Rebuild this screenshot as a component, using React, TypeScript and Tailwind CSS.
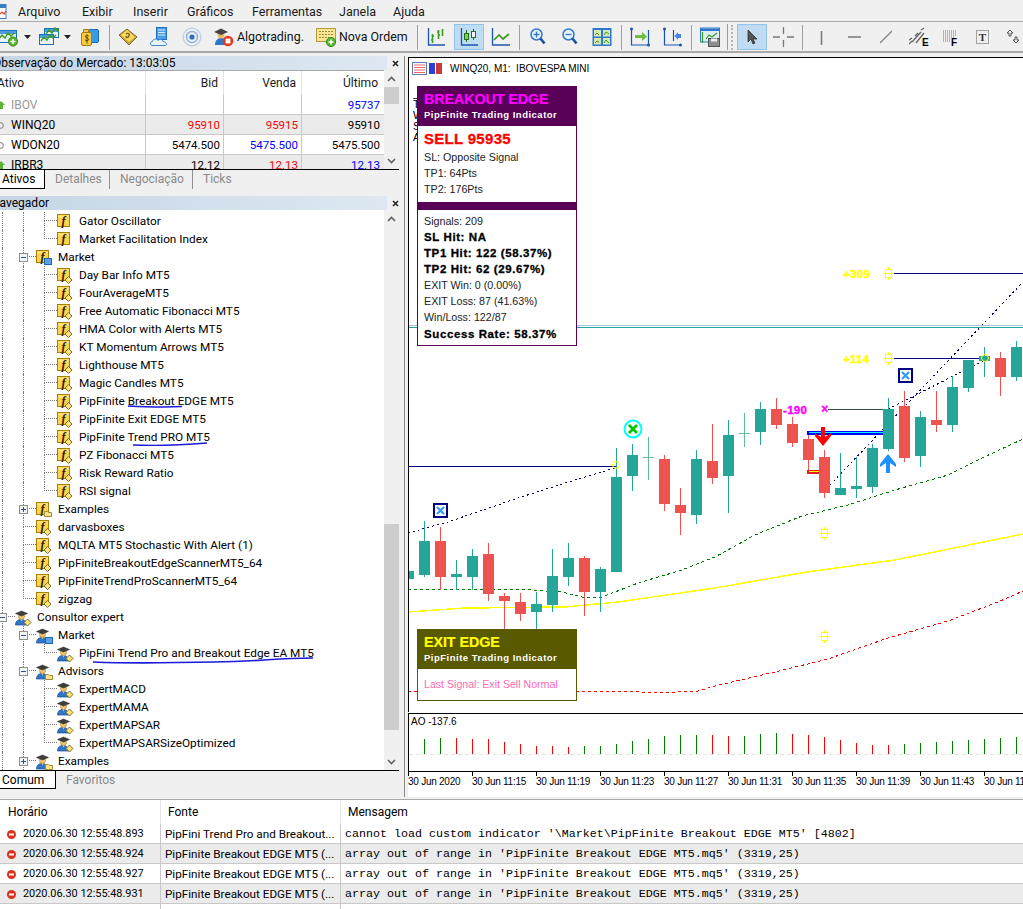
import React from "react";

const T = "#26a69a";
const R = "#ef5350";
const D = "#5fb89f";
const candles: [number, string, number, number, number, number][] = [
  [0, T, 565, 571, 579, 582],
  [1, T, 521, 541, 575, 577],
  [2, R, 527, 541, 577, 590],
  [3, T, 560, 574, 577, 590],
  [4, T, 549, 556, 577, 590],
  [5, R, 543, 554, 594, 601],
  [6, R, 593, 596, 601, 632],
  [7, R, 593, 602, 614, 621],
  [8, T, 592, 604, 612, 632],
  [9, T, 549, 576, 605, 612],
  [10, T, 543, 558, 577, 586],
  [11, R, 556, 558, 592, 616],
  [12, T, 567, 569, 592, 612],
  [13, T, 448, 477, 572, 572],
  [14, T, 444, 455, 476, 491],
  [16, R, 455, 459, 504, 511],
  [17, R, 488, 505, 513, 535],
  [18, T, 450, 459, 515, 524],
  [19, R, 424, 461, 478, 484],
  [20, T, 420, 435, 476, 513],
  [22, T, 402, 409, 432, 445],
  [23, R, 398, 409, 425, 429],
  [24, R, 417, 424, 443, 447],
  [25, R, 435, 439, 460, 472],
  [26, R, 450, 457, 493, 498],
  [27, T, 453, 488, 495, 495],
  [28, T, 457, 486, 489, 498],
  [29, T, 444, 448, 487, 493],
  [30, T, 398, 409, 449, 451],
  [31, R, 391, 406, 458, 462],
  [32, T, 411, 417, 456, 467],
  [33, R, 391, 420, 425, 432],
  [34, T, 376, 387, 425, 432],
  [35, T, 360, 360, 388, 392],
  [36, T, 347, 356, 361, 377],
  [37, R, 352, 358, 377, 396],
  [38, T, 341, 347, 377, 381],
];

const aoTops = [120,117,117,120,120,129,135,141,141,144,141,141,135,126,120,111,108,108,108,111,111,105,102,105,108,114,123,132,138,138,135,132,129,126,123,120,117,114];
const aoCol = "ggrrrrrrrrggggggggrrgggrrrrrrrgggggggg";

const sans = "[font-family:Roboto,'Noto_Sans',sans-serif]";

function FIcon({ kind = "diamond" }: { kind?: "diamond" | "plain" | "market" | "folder" }) {
  return (
    <svg width="16" height="17" viewBox="0 0 16 17" className="shrink-0">
      <rect x="0.5" y="1.500" width="12" height="12" fill="#ffd34d" stroke="#a97f00" />
      <rect x="1.500" y="2.500" width="10" height="2" fill="#ffe68a" />
      <text x="6.500" y="11.500" textAnchor="middle" fontFamily="'Liberation Serif',serif" fontStyle="italic" fontWeight="700" fontSize="12" fill="#2a2000">f</text>
      {kind === "diamond" && <path d="M11.500 9.500l3.500 3.500-3.500 3.500-3.500-3.500z" fill="#ffe27a" stroke="#6d5c16" strokeWidth="0.9" />}
      {kind === "market" && <rect x="8.500" y="9.500" width="7" height="6" fill="#5ba3e6" stroke="#1c63b0" />}
      {kind === "folder" && <path d="M8.500 10.500h3l1 1h3v4h-7z" fill="#ffe38a" stroke="#a48b35" />}
    </svg>
  );
}

function ExpertIcon({ kind = "diamond" }: { kind?: "diamond" | "market" | "folder" }) {
  return (
    <svg width="17" height="17" viewBox="0 0 17 17" className="shrink-0">
      <path d="M0.500 16c0-4 2.400-5.500 5.500-5.500s5.500 1.500 5.500 5.500z" fill="#2f76c9" stroke="#184e93" strokeWidth="0.7" />
      <circle cx="6.500" cy="7.500" r="3" fill="#f2c572" stroke="#a97826" strokeWidth="0.6" />
      <path d="M0.500 4.500L6.500 2l6 2.500-6 2.500z" fill="#3d3d3d" stroke="#222" strokeWidth="0.5" />
      <path d="M5.500 10.500l1 2 1-2z" fill="#e9d26c" />
      {kind === "diamond" && <path d="M12.500 10l3.500 3.500-3.500 3.500-3.500-3.500z" fill="#ffe27a" stroke="#6d5c16" strokeWidth="0.9" />}
      {kind === "market" && <rect x="9.500" y="10.500" width="7" height="6" fill="#5ba3e6" stroke="#1c63b0" />}
      {kind === "folder" && <path d="M9.500 11.500h3l1 1h3v4h-7z" fill="#ffe38a" stroke="#a48b35" />}
    </svg>
  );
}

function Toggle({ open }: { open: boolean }) {
  return (
    <span className="absolute left-[-4px] top-[5px] flex h-[9px] w-[9px] items-center justify-center border border-[#8e8f8f] bg-[#f4f4f4]">
      <span className="h-px w-[5px] bg-[#33518c]" />
      {!open && <span className="absolute h-[5px] w-px bg-[#33518c]" />}
    </span>
  );
}

function Elbow({ last, toggle }: { last?: boolean; toggle?: "open" | "closed" }) {
  return (
    <span className="relative flex h-full w-[13px] shrink-0 flex-col">
      <span className="h-[9px] border-b border-l border-dotted border-[#777]" />
      {!last && <span className="h-[9px] border-l border-dotted border-[#777]" />}
      {toggle && <Toggle open={toggle === "open"} />}
    </span>
  );
}

function Guide() {
  return <span className="h-full w-[21px] shrink-0 border-l border-dotted border-[#777]" />;
}

type RowT = { t: string; l: 1 | 2 | 3; icon: React.ReactNode; last?: boolean; toggle?: "open" | "closed" };

const f = <FIcon />;
const rows: RowT[] = [
  { t: "Gator Oscillator", l: 3, icon: <FIcon kind="plain" /> },
  { t: "Market Facilitation Index", l: 3, icon: <FIcon kind="plain" />, last: true },
  { t: "Market", l: 2, icon: <FIcon kind="market" />, toggle: "open" },
  { t: "Day Bar Info MT5", l: 3, icon: f },
  { t: "FourAverageMT5", l: 3, icon: f },
  { t: "Free Automatic Fibonacci MT5", l: 3, icon: f },
  { t: "HMA Color with Alerts MT5", l: 3, icon: f },
  { t: "KT Momentum Arrows MT5", l: 3, icon: f },
  { t: "Lighthouse MT5", l: 3, icon: f },
  { t: "Magic Candles MT5", l: 3, icon: f },
  { t: "PipFinite Breakout EDGE MT5", l: 3, icon: f },
  { t: "PipFinite Exit EDGE MT5", l: 3, icon: f },
  { t: "PipFinite Trend PRO MT5", l: 3, icon: f },
  { t: "PZ Fibonacci MT5", l: 3, icon: f },
  { t: "Risk Reward Ratio", l: 3, icon: f },
  { t: "RSI signal", l: 3, icon: f, last: true },
  { t: "Examples", l: 2, icon: <FIcon kind="folder" />, toggle: "closed" },
  { t: "darvasboxes", l: 2, icon: f },
  { t: "MQLTA MT5 Stochastic With Alert (1)", l: 2, icon: f },
  { t: "PipFiniteBreakoutEdgeScannerMT5_64", l: 2, icon: f },
  { t: "PipFiniteTrendProScannerMT5_64", l: 2, icon: f },
  { t: "zigzag", l: 2, icon: f, last: true },
  { t: "Consultor expert", l: 1, icon: <ExpertIcon />, toggle: "open" },
  { t: "Market", l: 2, icon: <ExpertIcon kind="market" />, toggle: "open" },
  { t: "PipFini Trend Pro and Breakout Edge EA MT5", l: 3, icon: <ExpertIcon />, last: true },
  { t: "Advisors", l: 2, icon: <ExpertIcon kind="folder" />, toggle: "open" },
  { t: "ExpertMACD", l: 3, icon: <ExpertIcon /> },
  { t: "ExpertMAMA", l: 3, icon: <ExpertIcon /> },
  { t: "ExpertMAPSAR", l: 3, icon: <ExpertIcon /> },
  { t: "ExpertMAPSARSizeOptimized", l: 3, icon: <ExpertIcon />, last: true },
  { t: "Examples", l: 2, icon: <ExpertIcon kind="folder" />, toggle: "closed" },
];

function TreeRow({ r }: { r: RowT }) {
  return (
    <div className="flex h-[18px] items-stretch pl-[2px] text-[11.8px] whitespace-nowrap">
      {r.l >= 2 && <Guide />}
      {r.l >= 3 && <Guide />}
      <Elbow last={r.last} toggle={r.toggle} />
      <span className="flex w-[22px] shrink-0 items-center">{r.icon}</span>
      <span className="flex items-center leading-[18px] text-[#000]">{r.t}</span>
    </div>
  );
}

function Chevron({ up }: { up?: boolean }) {
  return (
    <svg width="9" height="6" viewBox="0 0 9 6">
      <path d={up ? "M1 5l3.500-3.500L8 5" : "M1 1l3.500 3.500L8 1"} fill="none" stroke="#606060" strokeWidth="1.6" />
    </svg>
  );
}

function Scroll({ thumbTop, thumbH }: { thumbTop: string; thumbH: string }) {
  return (
    <div className="flex w-[15px] shrink-0 flex-col bg-[#f0f0f0]">
      <div className="flex h-[17px] items-center justify-center"><Chevron up /></div>
      <div className={thumbTop} />
      <div className={thumbH + " bg-[#cdcdcd]"} />
      <div className="flex-1" />
      <div className="flex h-[17px] items-center justify-center"><Chevron /></div>
    </div>
  );
}

function PanelHeader({ title }: { title: React.ReactNode }) {
  return (
    <div className="flex h-[14px] shrink-0 items-center bg-[#f0f0f0]">
      <div className="h-full w-[387px] overflow-hidden bg-gradient-to-r from-[#c6d6e6] to-[#dde8f2] leading-[14px] text-[#000] whitespace-nowrap">{title}</div>
      <svg width="7" height="7" viewBox="0 0 7 7" className="ml-[5px]"><path d="M1 1l5 5M6 1l-5 5" stroke="#222" strokeWidth="1.6" /></svg>
    </div>
  );
}

function Arrow({ up }: { up: boolean }) {
  return up ? (
    <svg width="6" height="9" viewBox="0 0 6 9" className="shrink-0"><path d="M-2 4l3-4 4 4H3v4H-1V4z" fill="#5cb531" /></svg>
  ) : (
    <svg width="6" height="9" viewBox="0 0 6 9" className="shrink-0"><circle cx="0.5" cy="4.500" r="2.800" fill="none" stroke="#999" strokeWidth="1.2" /></svg>
  );
}

const mw = [
  { a: "IBOV", up: true, gray: true, bid: "", bc: "", v: "", vc: "", u: "95737", uc: "text-[#0000ff]", z: false },
  { a: "WINQ20", up: false, bid: "95910", bc: "text-[#ff0000]", v: "95915", vc: "text-[#ff0000]", u: "95910", uc: "text-[#000]", z: true },
  { a: "WDON20", up: false, bid: "5474.500", bc: "text-[#000]", v: "5475.500", vc: "text-[#0000ff]", u: "5475.500", uc: "text-[#000]", z: false },
  { a: "IRBR3", up: true, bid: "12.12", bc: "text-[#000]", v: "12.13", vc: "text-[#ff0000]", u: "12.13", uc: "text-[#0000ff]", z: true },
];

function Sep({ cls }: { cls: string }) {
  return <span className={"h-[25px] w-px shrink-0 bg-[#a0a0a0] " + cls} />;
}

function Ic({ w, cls, children }: { w: number; cls: string; children: React.ReactNode }) {
  return (
    <svg width={w} height="20" viewBox={`0 0 ${w} 20`} className={"shrink-0 " + cls}>
      {children}
    </svg>
  );
}

function Caret({ cls }: { cls: string }) {
  return <Ic w={7} cls={cls}><path d="M0 8h7l-3.500 4z" fill="#222" /></Ic>;
}

function MiniChart({ x, y, w, h }: { x: number; y: number; w: number; h: number }) {
  return (
    <g>
      <rect x={x + 0.5} y={y + 0.5} width={w} height={h} fill="#eaf3fb" stroke="#1b6fc0" />
      <rect x={x + 1} y={y + 1} width={w - 1} height={3} fill="#4e9ce0" />
      <path d={`M${x + 2} ${y + h - 3}l3-4 3 3 3-5 3 3 3-3`} fill="none" stroke="#3d9b1f" strokeWidth="1.4" />
    </g>
  );
}

function Toolbar() {
  return (
    <div className="flex h-[31px] shrink-0 items-center border-b-2 border-[#a9a9a9] bg-[#f0f0f0] pt-[1px]">
      <Ic w={18} cls="ml-0">
        <MiniChart x={-3} y={3} w={19} h={12} />
        <circle cx="13" cy="14.500" r="4.600" fill="#5cb531" stroke="#3b8a1c" />
        <path d="M10.500 14.500h5M13 12v5" stroke="#fff" strokeWidth="1.5" />
      </Ic>
      <Caret cls="ml-[6px]" />
      <Ic w={20} cls="ml-[8px]">
        <MiniChart x={5} y={1} w={14} h={9} />
        <MiniChart x={0} y={7} w={14} h={10} />
      </Ic>
      <Caret cls="ml-[5px]" />
      <Ic w={20} cls="ml-[9px]">
        <rect x="8.500" y="2.500" width="10" height="13" rx="1.5" fill="#3a9ae6" stroke="#1b6fc0" />
        <rect x="1.500" y="5.500" width="10" height="13" rx="1.5" fill="#f7c93e" stroke="#a77f08" />
        <path d="M3.500 2.500h5v3h-5z" fill="#e8c860" stroke="#a77f08" />
        <path d="M8.600 9c-.7-.9-3.300-.9-3.300.7s3.400 1 3.400 2.700-2.800 1.600-3.600.5M7 7.500v9" fill="none" stroke="#5e4400" strokeWidth="1" />
      </Ic>
      <Sep cls="ml-[9px]" />
      <Ic w={20} cls="ml-[8px]">
        <path d="M1 8L9 2l10 8-8 8z" fill="#c9a233" stroke="#7f6a2a" />
        <path d="M3 8l6-5 8 7-6 5z" fill="#f7d85f" />
        <path d="M8 7c2-1.500 4 0 3 2s-3 2-3 0" fill="none" stroke="#7b5b12" strokeWidth="1.4" />
      </Ic>
      <Ic w={20} cls="ml-[12px]">
        <rect x="6.500" y="0.500" width="10" height="12" fill="#4d9fe6" stroke="#1b6fc0" />
        <path d="M8 3h7M8 5.500h7M8 8h7" stroke="#d8ecfb" />
        <path d="M2 18.500c-2.500-.5-2-4 .5-4 .2-2.600 4-3.400 5.500-1 2-2 5-1 5 1.300 2.500-1 5.500 3.200 2 3.700z" fill="#e8f3fc" stroke="#3e86cf" />
      </Ic>
      <Ic w={20} cls="ml-[12px]">
        <circle cx="10" cy="10" r="2.600" fill="#2d6ec2" />
        <circle cx="10" cy="10" r="5.500" fill="none" stroke="#8ab1dd" strokeWidth="1.4" />
        <circle cx="10" cy="10" r="8.800" fill="none" stroke="#b7cfe8" strokeWidth="1.2" />
      </Ic>
      <Ic w={20} cls="ml-[12px]">
        <path d="M1 18c0-5 3-7 6-7s6 2 6 7z" fill="#2f76c9" />
        <circle cx="7" cy="8" r="3.400" fill="#eab766" />
        <path d="M0 5l7-3.500L14 5 7 8z" fill="#444" />
        <circle cx="14" cy="14" r="5.300" fill="#e33a1f" />
        <rect x="11.600" y="11.600" width="4.800" height="4.800" fill="#fff" />
      </Ic>
      <span className="ml-[3px] w-[66px] shrink-0 text-[12.4px] text-[#111] whitespace-nowrap">Algotrading.</span>
      <Ic w={20} cls="ml-[13px]">
        <rect x="0.5" y="1.500" width="19" height="13" fill="#fbe694" stroke="#b79a38" />
        <path d="M3 4.500h14M3 7.500h14M3 10.500h10" stroke="#9d8a45" strokeDasharray="2 1" />
        <circle cx="15" cy="15" r="4.600" fill="#5cb531" stroke="#3b8a1c" />
        <path d="M12.500 15h5M15 12.500v5" stroke="#fff" strokeWidth="1.5" />
      </Ic>
      <span className="ml-[3px] w-[68px] shrink-0 text-[12.4px] text-[#111] whitespace-nowrap">Nova Ordem</span>
      <Sep cls="ml-[10px]" />
      <Ic w={18} cls="ml-[9px]">
        <path d="M1.500 1v17H18" fill="none" stroke="#1b55b4" strokeWidth="1.3" />
        <path d="M5.500 7v9M4 13h1.500M5.500 9H7M11.500 3v9M10 5h1.500M11.500 8H13" stroke="#3d9b1f" strokeWidth="1.6" fill="none" />
        <path d="M15.500 2v7" stroke="#3d9b1f" strokeWidth="1.6" />
      </Ic>
      <span className="ml-[9px] flex h-[26px] w-[30px] shrink-0 items-center justify-center border border-[#92c5ec] bg-[#bfdcf3]">
        <Ic w={18} cls="">
          <path d="M1.500 1v17H18" fill="none" stroke="#1b55b4" strokeWidth="1.3" />
          <path d="M6.500 3v12M13.500 2v11" stroke="#236f1a" />
          <rect x="4.500" y="6.500" width="4" height="6" fill="#7ad048" stroke="#236f1a" />
          <rect x="11.500" y="4.500" width="4" height="6" fill="#f7f7f7" stroke="#236f1a" />
        </Ic>
      </span>
      <Ic w={19} cls="ml-[7px]">
        <path d="M1.500 1v17H19" fill="none" stroke="#1b55b4" strokeWidth="1.3" />
        <path d="M3 13l5-5 4 4 6-5" fill="none" stroke="#3d9b1f" strokeWidth="1.7" />
      </Ic>
      <Sep cls="ml-[9px]" />
      <Ic w={16} cls="ml-[10px]">
        <circle cx="6.500" cy="7.500" r="5.500" fill="#e9f3fb" stroke="#2f79cc" strokeWidth="1.5" />
        <path d="M3.500 7.500h6M6.500 4.500v6" stroke="#2f79cc" strokeWidth="1.3" />
        <path d="M10.500 11.500l4 5" stroke="#1d4f9c" strokeWidth="2.6" />
      </Ic>
      <Ic w={16} cls="ml-[16px]">
        <circle cx="6.500" cy="7.500" r="5.500" fill="#e9f3fb" stroke="#2f79cc" strokeWidth="1.5" />
        <path d="M3.500 7.500h6" stroke="#2f79cc" strokeWidth="1.3" />
        <path d="M10.500 11.500l4 5" stroke="#1d4f9c" strokeWidth="2.6" />
      </Ic>
      <Ic w={20} cls="ml-[14px]">
        <rect x="0.5" y="1" width="19" height="18" fill="#2f79cc" />
        <rect x="2" y="3" width="7" height="6.500" fill="#d7e8b8" />
        <rect x="11" y="3" width="7" height="6.500" fill="#d7e8b8" />
        <rect x="2" y="11" width="7" height="6.500" fill="#d7e8b8" />
        <rect x="11" y="11" width="7" height="6.500" fill="#d7e8b8" />
        <path d="M3 8l2-2 2 2M12 8l2-3 3 2M3 16l2-2 2 1M12 16l2-3 3 3" fill="none" stroke="#3d9b1f" />
      </Ic>
      <Sep cls="ml-[9px]" />
      <Ic w={20} cls="ml-[8px]">
        <path d="M1.500 1v17H19M18.500 3v15" fill="none" stroke="#1b55b4" strokeWidth="1.2" />
        <path d="M5 8h7V5l5 4.500-5 4.500v-3H5z" fill="#6dbd3e" />
        <circle cx="1.500" cy="2" r="1.5" fill="#1b55b4" />
        <circle cx="18.500" cy="18" r="1.5" fill="#1b55b4" />
      </Ic>
      <Ic w={20} cls="ml-[12px]">
        <path d="M2.500 1v17H19M11.500 3v11" fill="none" stroke="#1b55b4" strokeWidth="1.2" />
        <path d="M19 7h-3V5l-3.500 4 3.500 4v-2h3z" fill="#4488dd" />
        <circle cx="2.500" cy="2" r="1.5" fill="#1b55b4" />
        <circle cx="18.500" cy="18" r="1.5" fill="#1b55b4" />
      </Ic>
      <Sep cls="ml-[9px]" />
      <Ic w={20} cls="ml-[8px]">
        <rect x="0.5" y="1" width="19" height="14" fill="#ddecf9" stroke="#2f79cc" />
        <rect x="1" y="1.500" width="18" height="2.500" fill="#2f79cc" />
        <path d="M2.500 5v11M6 12l3-4 3 2 5-4" fill="none" stroke="#3d9b1f" strokeWidth="1.2" />
        <rect x="8.500" y="11.500" width="11" height="8" fill="#8e8e8e" stroke="#555" />
        <rect x="11" y="11.500" width="6" height="3" fill="#eee" />
      </Ic>
      <span className="ml-[7px] h-[26px] w-px shrink-0 bg-[#9a9a9a]" />
      <span className="ml-[3px] h-[25px] w-[2px] shrink-0 border-l-2 border-dotted border-[#b5b5b5]" />
      <span className="ml-[4px] flex h-[26px] w-[30px] shrink-0 items-center justify-center border border-[#92c5ec] bg-[#bfdcf3]">
        <Ic w={10} cls=""><path d="M1 3v12l3-3 2 5 2-1-2-4h4z" fill="#555" stroke="#222" strokeWidth="0.7" /></Ic>
      </span>
      <Ic w={21} cls="ml-[6px]">
        <path d="M10.500 0v7M10.500 13v7M0 10h7M14 10h7" stroke="#777" strokeWidth="1.3" />
      </Ic>
      <Sep cls="ml-[8px]" />
      <Ic w={3} cls="ml-[17px]"><path d="M1.500 4v14" stroke="#7c7c7c" strokeWidth="1.6" /></Ic>
      <Ic w={13} cls="ml-[25px]"><path d="M0 10h13" stroke="#666" strokeWidth="1.3" /></Ic>
      <Ic w={12} cls="ml-[19px]"><path d="M0 16L12 4" stroke="#888" strokeWidth="1.5" /></Ic>
      <Ic w={20} cls="ml-[17px]">
        <path d="M0 13l3-2M0 17l3-3M6 9l3-3M12 3l3-2M3 15l9-10M7 16l8-10" stroke="#666" strokeWidth="1.3" fill="none" />
        <text x="13" y="19" fontFamily="'Liberation Sans',sans-serif" fontWeight="700" fontSize="10" fill="#000">E</text>
      </Ic>
      <Ic w={16} cls="ml-[13px]">
        <path d="M1 4h13M1 6h13M1 8h13M1 10h11M1 12h8M1 14h8" stroke="#777" strokeDasharray="1 1" />
        <text x="9" y="19" fontFamily="'Liberation Sans',sans-serif" fontWeight="700" fontSize="10" fill="#000">F</text>
      </Ic>
      <Ic w={13} cls="ml-[18px]">
        <rect x="0.5" y="3.500" width="12" height="13" fill="none" stroke="#555" strokeDasharray="1 1" />
        <text x="6.500" y="14" textAnchor="middle" fontFamily="'Liberation Serif',serif" fontWeight="700" fontSize="11" fill="#333">T</text>
      </Ic>
      <Ic w={14} cls="ml-[17px]">
        <path d="M4 3l3 3H5v3H3V6H1zM10 16l3-3h-2v-3H9v3H7z" fill="#eee" stroke="#555" />
      </Ic>
    </div>
  );
}

function Poly({ pts, color, dash, w = 1 }: { pts: string; color: string; dash?: string; w?: number }) {
  return <polyline points={pts} fill="none" stroke={color} strokeWidth={w} strokeDasharray={dash} shapeRendering="crispEdges" />;
}

function Hash({ x, y }: { x: number; y: number }) {
  return (
    <g fill="#ffff00" shapeRendering="crispEdges">
      <rect x={x - 3} y={y - 4} width="7" height="1" />
      <rect x={x - 3} y={y + 4} width="7" height="1" />
      <rect x={x - 5} y={y} width="11" height="1" />
      <rect x={x - 3} y={y - 4} width="1" height="9" />
      <rect x={x + 3} y={y - 4} width="1" height="9" />
      <rect x={x} y={y - 6} width="1" height="2" />
      <rect x={x} y={y + 5} width="1" height="2" />
    </g>
  );
}

function XBox({ x, y }: { x: number; y: number }) {
  return (
    <g>
      <rect x={x - 6} y={y - 6} width="13" height="13" fill="#fff" stroke="#000080" strokeWidth="2" shapeRendering="crispEdges" />
      <path d={`M${x - 3} ${y - 3}l7 7M${x + 4} ${y - 3}l-7 7`} stroke="#3399ff" strokeWidth="2.2" />
    </g>
  );
}

function MainChart() {
  const lbl = { fontFamily: "'Liberation Sans',sans-serif", fontWeight: 700, fontSize: 11.5, letterSpacing: 0.3, strokeWidth: 0.4 };
  return (
    <svg width="614" height="654" viewBox="409 58 614 654" className="block">
      <rect x="409" y="325" width="614" height="1" fill="#a9c1dd" />
      <rect x="409" y="327" width="614" height="1" fill="#26a69a" />
      <rect x="409" y="466" width="207" height="1" fill="#000080" />
      <rect x="888" y="273" width="135" height="1" fill="#000080" />
      <rect x="888" y="358" width="97" height="1" fill="#000080" />
      <Poly pts="408,589 515,589 562,592 582,597 602,597 638,583 682,570 715,557 755,535 802,516 848,505 895,490 948,475 982,458 1023,439" color="#007a00" dash="3 3" />
      <Poly pts="408,612 465,608 565,607 618,602 715,588 807,572 895,560 1023,534" color="#ffff00" w={1.5} />
      <Poly pts="408,691 625,691 652,693 698,691 715,686 775,672 828,659 888,638 948,621 998,602 1023,591" color="#ff0000" dash="3 3" />
      <Poly pts="408,533 448,522 518,498 578,479 615,468" color="#000080" dash="2 3" />
      <Poly pts="830,485 1023,282" color="#000080" dash="2 3" />
      <Poly pts="888,409 985,360" color="#000080" dash="2 3" />
      {candles.map(([k, c, h, o, b, l]) => {
        const x = 408 + 16 * k;
        return (
          <g key={k} shapeRendering="crispEdges">
            <rect x={x} y={h} width="1" height={l - h} fill={c} />
            <rect x={x - 5} y={o} width="11" height={Math.max(b - o, 1)} fill={c} />
          </g>
        );
      })}
      {[[648, 437, 457, 480], [744, 413, 433, 447]].map(([x, h, m, l]) => (
        <g key={x} shapeRendering="crispEdges">
          <rect x={x} y={h} width="1" height={l - h} fill={D} />
          <rect x={x - 5} y={m} width="11" height="1" fill={D} />
        </g>
      ))}
      <XBox x={440} y={510} />
      <XBox x={905} y={375} />
      <circle cx="633" cy="429" r="8.500" fill="#fff" stroke="#00ffff" strokeWidth="2" />
      <path d="M629 425l8 8M637 425l-8 8" stroke="#00cc00" strokeWidth="2.8" />
      <circle cx="616" cy="465" r="3.500" fill="none" stroke="#ffff00" />
      <circle cx="985" cy="358" r="3.500" fill="none" stroke="#ffff00" />
      <g shapeRendering="crispEdges">
        <rect x="807" y="431" width="76" height="4" fill="#0000ff" />
        <rect x="809" y="432" width="74" height="1" fill="#00ffff" />
        <rect x="807" y="470" width="12" height="4" fill="#dd2222" />
        <rect x="809" y="471" width="10" height="1" fill="#ffff00" />
        <rect x="828" y="409" width="55" height="1" fill="#2f4f4f" />
      </g>
      <path d="M821 427h4v10l6-4v3l-8 10-8-10v-3l6 4z" fill="#ff0000" />
      <path d="M888 454l8 10v3l-6-4v10h-4v-10l-6 4v-3z" fill="#1e90ff" />
      <text x="825" y="413" textAnchor="middle" {...lbl} fontSize={12} fill="#ff00ff" stroke="#ff00ff">×</text>
      <text x="783" y="414" {...lbl} fill="#ff00ff" stroke="#ff00ff">-190</text>
      <text x="843" y="278" {...lbl} fill="#ffff00" stroke="#ffff00">+309</text>
      <text x="843" y="363" {...lbl} fill="#ffff00" stroke="#ffff00">+114</text>
      <Hash x={888} y={273} />
      <Hash x={888} y={358} />
      <Hash x={824} y={533} />
      <Hash x={824} y={636} />
    </svg>
  );
}

const rowT = "flex items-center pl-[6px] text-[10.7px] text-[#222] whitespace-nowrap";
const rowB = "flex items-center pl-[6px] text-[11.5px] font-bold tracking-[0.6px] text-[#000] whitespace-nowrap [-webkit-text-stroke:0.3px_#000]";

function PanelHead({ title, bg, color }: { title: string; bg: string; color: string }) {
  return (
    <div className={"h-[40px] pl-[7px] pt-[5px] " + bg}>
      <div className={"h-[16px] text-[14.2px] font-bold leading-[16px] whitespace-nowrap [-webkit-text-stroke:0.2px_currentColor] " + color}>{title}</div>
      <div className="mt-[2px] text-[9.5px] font-bold leading-[12px] tracking-[0.5px] text-white whitespace-nowrap">PipFinite Trading Indicator</div>
    </div>
  );
}

const logs = [
  ["2020.06.30 12:55:48.893", "PipFini Trend Pro and Breakout...", "cannot load custom indicator '\\Market\\PipFinite Breakout EDGE MT5' [4802]"],
  ["2020.06.30 12:55:48.924", "PipFinite Breakout EDGE MT5 (...", "array out of range in 'PipFinite Breakout EDGE MT5.mq5' (3319,25)"],
  ["2020.06.30 12:55:48.927", "PipFinite Breakout EDGE MT5 (...", "array out of range in 'PipFinite Breakout EDGE MT5.mq5' (3319,25)"],
  ["2020.06.30 12:55:48.931", "PipFinite Breakout EDGE MT5 (...", "array out of range in 'PipFinite Breakout EDGE MT5.mq5' (3319,25)"],
];

const times = ["30 Jun 2020", "30 Jun 11:15", "30 Jun 11:19", "30 Jun 11:23", "30 Jun 11:27", "30 Jun 11:31", "30 Jun 11:35", "30 Jun 11:39", "30 Jun 11:43", "30 Jun 11:47"];

export default function App() {
  return (
    <div className={"flex h-[909px] w-[1023px] flex-col overflow-hidden bg-[#f0f0f0] text-[12px] text-[#000] " + sans}>
      {/* menu */}
      <div className="flex h-[22px] shrink-0 items-center border-b border-[#a9a9a9] pt-[2px] text-[12.5px] leading-[18px] text-[#1a1a1a]">
        <svg width="7" height="15" viewBox="0 0 7 15" className="shrink-0"><rect x="-8" y="0.5" width="14" height="14" fill="#fff" stroke="#3a7fc6" /><rect x="-8" y="1" width="14" height="3" fill="#3a7fc6" /><path d="M0 10l2-2 2 2 2-3" fill="none" stroke="#e04020" strokeWidth="1.2" /></svg>
        <span className="ml-[11px] w-[64px] shrink-0">Arquivo</span>
        <span className="w-[51px] shrink-0">Exibir</span>
        <span className="w-[54px] shrink-0">Inserir</span>
        <span className="w-[65px] shrink-0">Gráficos</span>
        <span className="w-[87px] shrink-0">Ferramentas</span>
        <span className="w-[54px] shrink-0">Janela</span>
        <span className="shrink-0">Ajuda</span>
      </div>
      <Toolbar />
      <div className="flex h-[744px] shrink-0 pt-[3px]">
        {/* left */}
        <div className="flex h-full w-[405px] shrink-0 flex-col border-r border-[#8a8a8a] pr-[5px] pb-[7px]">
          <PanelHeader title={<span className="ml-[-7px]">Observação do Mercado: 13:03:05</span>} />
          <div className="flex h-[99px] shrink-0 bg-white">
            <div className="min-w-0 flex-1 overflow-hidden border-t border-[#a9a9a9]">
              <div className="grid h-[24px] grid-cols-[146px_78px_78px_81px] items-center text-[#1a1a1a]">
                <span className="ml-[-3px] h-full border-r border-[#e3e3e3] leading-[24px]">Ativo</span>
                <span className="h-full border-r border-[#e3e3e3] pr-[5px] text-right leading-[24px]">Bid</span>
                <span className="h-full border-r border-[#e3e3e3] pr-[5px] text-right leading-[24px]">Venda</span>
                <span className="h-full pr-[5px] text-right leading-[24px]">Último</span>
              </div>
              {mw.map((r) => (
                <div key={r.a} className={"grid h-[20px] grid-cols-[146px_78px_78px_81px] border-b border-[#c8c8c8] leading-[21px] " + (r.z ? "bg-[#ebebeb]" : "bg-white")}>
                  <span className="flex items-center border-r border-[#c8c8c8]">
                    <Arrow up={r.up} />
                    <span className={"ml-[5px] " + (r.gray ? "text-[#999]" : "text-[#000]")}>{r.a}</span>
                  </span>
                  <span className={"border-r border-[#c8c8c8] pr-[3px] text-right text-[11.5px] " + r.bc}>{r.bid}</span>
                  <span className={"border-r border-[#c8c8c8] pr-[3px] text-right text-[11.5px] " + r.vc}>{r.v}</span>
                  <span className={"pr-[3px] text-right text-[11.5px] " + r.uc}>{r.u}</span>
                </div>
              ))}
            </div>
            <Scroll thumbTop="h-0" thumbH="h-[17px]" />
          </div>
          <div className="flex h-[21px] shrink-0 items-start border-t border-black text-[#8a8a8a]">
            <span className="flex h-[19px] w-[45px] items-center border-r border-b border-black bg-white pl-[2px] text-[#000]">Ativos</span>
            <span className="ml-[10px] w-[55px] border-r border-[#909090] leading-[19px]">Detalhes</span>
            <span className="ml-[10px] w-[73px] border-r border-[#909090] leading-[19px]">Negociação</span>
            <span className="ml-[10px] leading-[19px]">Ticks</span>
          </div>
          <div className="mt-[6px]">
            <PanelHeader title={<span className="ml-[-9px]">Navegador</span>} />
          </div>
          <div className="relative flex min-h-0 flex-1 bg-white">
            <div className="min-w-0 flex-1 overflow-hidden pt-[2px]">
              {rows.map((r, i) => <TreeRow key={i} r={r} />)}
            </div>
            <Scroll thumbTop="h-[297px]" thumbH="h-[206px]" />
            <svg width="330" height="470" viewBox="0 210 330 470" className="pointer-events-none absolute left-0 top-0">
              <path d="M128 406c20 1 36 1.500 54 .5" fill="none" stroke="#1a1ad8" strokeWidth="1.4" />
              <path d="M133 445c25 1 50 0 74-2" fill="none" stroke="#1a1ad8" strokeWidth="1.4" />
              <path d="M93 662c50 2 70 .5 120 0s60-4 100-4" fill="none" stroke="#1a1ad8" strokeWidth="1.6" />
            </svg>
          </div>
          <div className="flex h-[20px] shrink-0 items-start border-t border-black text-[#8a8a8a]">
            <span className="flex h-[18px] w-[56px] items-center border-r border-b border-black bg-white pl-[2px] text-[#000]">Comum</span>
            <span className="ml-[10px] leading-[18px]">Favoritos</span>
          </div>
        </div>
        {/* chart */}
        <div className="ml-[3px] mt-px flex min-w-0 flex-1 flex-col bg-white">
          <div className="relative h-[655px] shrink-0 overflow-hidden border-t border-l border-black">
            <MainChart />
            <div className="absolute left-[3px] top-[4px] flex items-center [font-family:'Liberation_Sans',sans-serif] text-[10px] leading-[12px]">
              <svg width="30" height="13" viewBox="0 0 30 13" className="shrink-0">
                <rect x="0.5" y="0.5" width="14" height="12" fill="#fff" stroke="#5a7fb8" />
                <path d="M2 3h11M2 5.500h11M2 8h11M2 10.500h11" stroke="#e66" />
                <rect x="17" y="1" width="6" height="11" fill="#2a3fd8" />
                <rect x="24" y="1" width="6" height="11" fill="#c83a3a" />
              </svg>
              <span className="ml-[8px] whitespace-nowrap">WINQ20, M1:&nbsp; IBOVESPA MINI</span>
            </div>
            <div className="absolute left-[4px] top-[30px] w-[12px] overflow-hidden [font-family:'Liberation_Sans',sans-serif] text-[11px] leading-[11px]">
              <div>__</div><div>T</div><div>W</div><div>S</div><div>A</div>
            </div>
            {/* breakout panel */}
            <div className="absolute left-[8px] top-[28px] h-[260px] w-[160px] border border-[#590059] bg-white [font-family:'Liberation_Sans',sans-serif]">
              <div className="-mx-px -mt-px">
                <PanelHead title="BREAKOUT EDGE" bg="bg-[#590059]" color="text-[#ff00ff]" />
              </div>
              <div className="flex h-[22px] items-end pl-[6px] text-[15px] font-bold leading-[18px] tracking-[0.3px] text-[#ff0000] [-webkit-text-stroke:0.3px_#f00]">SELL 95935</div>
              <div className={rowT + " mt-[1px] h-[16px]"}>SL: Opposite Signal</div>
              <div className={rowT + " h-[16px]"}>TP1: 64Pts</div>
              <div className={rowT + " h-[16px]"}>TP2: 176Pts</div>
              <div className="mt-[5px] h-[8px] bg-[#590059]" />
              <div className={rowT + " mt-[3px] h-[16px]"}>Signals: 209</div>
              <div className={rowB + " mt-[1px] h-[16px]"}>SL Hit: NA</div>
              <div className={rowB + " h-[16px]"}>TP1 Hit: 122 (58.37%)</div>
              <div className={rowB + " h-[16px]"}>TP2 Hit: 62 (29.67%)</div>
              <div className={rowT + " h-[15px]"}>EXIT Win: 0 (0.00%)</div>
              <div className={rowT + " h-[16px]"}>EXIT Loss: 87 (41.63%)</div>
              <div className={rowT + " h-[16px]"}>Win/Loss: 122/87</div>
              <div className={rowB + " mt-px h-[17px]"}>Success Rate: 58.37%</div>
            </div>
            {/* exit panel */}
            <div className="absolute left-[8px] top-[571px] h-[72px] w-[160px] border border-[#595900] bg-white [font-family:'Liberation_Sans',sans-serif]">
              <div className="-mx-px -mt-px">
                <PanelHead title="EXIT EDGE" bg="bg-[#595900]" color="text-[#ffff00]" />
              </div>
              <div className="flex h-[32px] items-center pl-[6px] text-[10.6px] text-[#ff69b4] whitespace-nowrap">Last Signal: Exit Sell Normal</div>
            </div>
          </div>
          <div className="h-px shrink-0 bg-white" />
          <div className="relative h-[59px] shrink-0 overflow-hidden border-t border-b border-l border-black">
            <svg width="614" height="57" viewBox="409 715 614 57" className="block">
              <path d="M409 755.500H1023" stroke="#e4e4e4" strokeDasharray="4 3" shapeRendering="crispEdges" />
              {aoTops.map((t, i) => {
                const top = 700 + t / 3;
                return <rect key={i} x={424 + 16 * i} y={top} width="1" height={755 - top} fill={aoCol[i] === "g" ? "#008000" : "#ff0000"} shapeRendering="crispEdges" />;
              })}
            </svg>
            <span className="absolute left-[2px] top-[1px] [font-family:'Liberation_Sans',sans-serif] text-[10px] leading-[14px]">AO -137.6</span>
          </div>
          <div className="flex h-[23px] shrink-0 overflow-hidden bg-white [font-family:'Liberation_Sans',sans-serif] text-[10px] tracking-[-0.25px]">
            {times.map((t) => (
              <span key={t} className="flex w-[64px] shrink-0 flex-col">
                <span className="h-[4px] w-px bg-black" />
                <span className="leading-[11px] whitespace-nowrap">{t}</span>
              </span>
            ))}
          </div>
        </div>
      </div>
      {/* log */}
      <div className="mt-[2px] flex min-h-0 flex-1 flex-col overflow-hidden border-t border-[#a9a9a9] bg-white text-[12px]">
        <div className="grid h-[24px] shrink-0 grid-cols-[161px_180px_1fr] leading-[24px]">
          <span className="border-r border-[#e3e3e3] pl-[8px]">Horário</span>
          <span className="border-r border-[#e3e3e3] pl-[7px]">Fonte</span>
          <span className="pl-[7px]">Mensagem</span>
        </div>
        {logs.map((l, i) => (
          <div key={l[0]} className={"grid h-[20px] shrink-0 grid-cols-[161px_180px_1fr] border-b border-[#c8c8c8] leading-[20px] " + (i % 2 ? "bg-[#ebebeb]" : "bg-white")}>
            <span className="flex items-center border-r border-[#c8c8c8] pl-[7px] whitespace-nowrap">
              <svg width="9" height="9" viewBox="0 0 9 9" className="shrink-0"><circle cx="4.500" cy="4.500" r="4.500" fill="#d8321e" /><rect x="2" y="3.500" width="5" height="2" fill="#fff" /></svg>
              <span className="ml-[7px] text-[10.9px]">{l[0]}</span>
            </span>
            <span className="overflow-hidden border-r border-[#c8c8c8] pl-[4px] whitespace-nowrap text-[11.7px]">{l[1]}</span>
            <span className="pl-[4px] whitespace-pre text-[11.67px] [font-family:'Liberation_Mono',monospace]">{l[2]}</span>
          </div>
        ))}
        <div className="grid min-h-0 flex-1 grid-cols-[161px_180px_1fr]">
          <span className="border-r border-[#c8c8c8]" />
          <span className="border-r border-[#c8c8c8]" />
          <span />
        </div>
      </div>
    </div>
  );
}
